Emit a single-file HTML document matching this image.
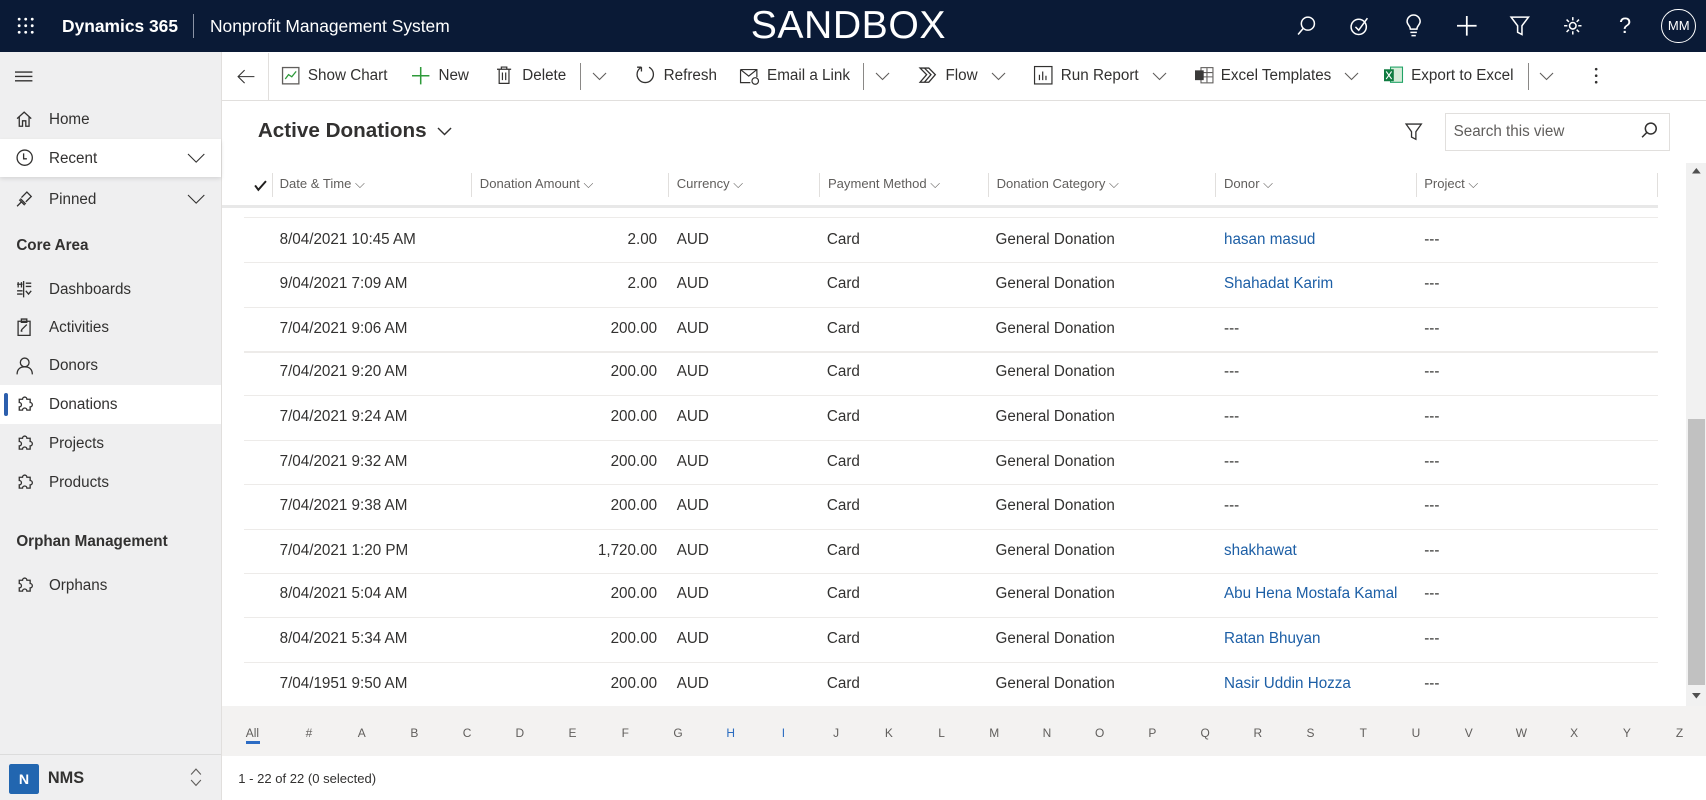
<!DOCTYPE html>
<html><head><meta charset="utf-8"><style>
html,body{margin:0;padding:0;overflow:hidden}
body{width:1568px;height:735px;zoom:1.08801;font-family:"Liberation Sans",sans-serif;color:#323130;position:relative;background:#fff}
.a{position:absolute;white-space:nowrap}
.top{left:0;top:0;width:1568px;height:48px;background:#0a1a36}
.side{left:0;top:48px;width:203px;height:687px;background:#efeff0;border-right:1px solid #e1dfdd}
.nav{font-size:14px;color:#323130}
.hdr{font-size:12px;color:#605e5c;top:162px}
.sep{width:1px;height:22px;background:#e1dfdd;top:159px}
.row{font-size:14px;color:#323130}
.lnk{color:#1d5fa6}
.rl{left:224px;width:1300px;height:1px;background:#edebe9}
.ab{font-size:11px;color:#605e5c;top:667px;width:20px;text-align:center}
svg{position:absolute;overflow:visible}
</style></head><body>
<div class="a top"></div>
<svg style="left:16px;top:16px" width="16" height="16" fill="#fff"><circle cx="2" cy="2" r="1.3"/><circle cx="8" cy="2" r="1.3"/><circle cx="14" cy="2" r="1.3"/><circle cx="2" cy="8" r="1.3"/><circle cx="8" cy="8" r="1.3"/><circle cx="14" cy="8" r="1.3"/><circle cx="2" cy="14" r="1.3"/><circle cx="8" cy="14" r="1.3"/><circle cx="14" cy="14" r="1.3"/></svg>
<div class="a" style="left:57px;top:15px;color:#fff;font-weight:bold;font-size:16px">Dynamics 365</div>
<div class="a" style="left:177px;top:13px;width:1px;height:22px;background:#8a93a5"></div>
<div class="a" style="left:193px;top:15px;color:#fff;font-size:16px">Nonprofit Management System</div>
<div class="a" style="left:690px;top:4px;color:#fff;font-size:36px;letter-spacing:0.5px">SANDBOX</div>
<svg style="left:1192px;top:15px" width="18" height="18" stroke="#fff" fill="none" stroke-width="1.4"><circle cx="10" cy="7" r="6"/><path d="M6 11 L1 17"/></svg>
<svg style="left:1241px;top:15px" width="18" height="18" stroke="#fff" fill="none" stroke-width="1.4"><circle cx="8" cy="10" r="7"/><path d="M5 10l3 3 8-11"/></svg>
<svg style="left:1292px;top:14px" width="14" height="20" stroke="#fff" fill="none" stroke-width="1.4"><path d="M4 13 C4 10 1 9 1 6 A6 6 0 0 1 13 6 C13 9 10 10 10 13 Z M4 16h6 M5 19h4"/></svg>
<svg style="left:1339px;top:15px" width="18" height="18" stroke="#fff" stroke-width="1.6"><path d="M9 0v18M0 9h18"/></svg>
<svg style="left:1388px;top:15px" width="18" height="18" stroke="#fff" fill="none" stroke-width="1.4"><path d="M1 1h16l-6 8v8l-4-2V9z"/></svg>
<svg style="left:1437px;top:15px" width="18" height="18" stroke="#fff" fill="none" stroke-width="1.4"><circle cx="9" cy="9" r="3"/><path d="M9 1v3M9 14v3M1 9h3M14 9h3M3.3 3.3l2.1 2.1M12.6 12.6l2.1 2.1M3.3 14.7l2.1-2.1M12.6 5.4l2.1-2.1"/></svg>
<div class="a" style="left:1488px;top:12px;color:#fff;font-size:20px">?</div>
<div class="a" style="left:1527px;top:8px;width:30px;height:30px;border:1.5px solid #fff;border-radius:50%;color:#fff;font-size:12px;text-align:center;line-height:30px">MM</div>

<div class="a side"></div>
<svg style="left:14px;top:65px" width="16" height="10" stroke="#323130" stroke-width="1.2"><path d="M0 1h16M0 5h16M0 9h16"/></svg>
<svg style="left:15px;top:102px" width="15" height="15" stroke="#323130" fill="none" stroke-width="1.2"><path d="M1 7L7.5 1 14 7M3 5v9h3v-5h3v5h3V5"/></svg>
<div class="a nav" style="left:45px;top:102px">Home</div>
<div class="a" style="left:0;top:128px;width:203px;height:35px;background:#fff;box-shadow:0 2px 4px rgba(0,0,0,.12)"></div>
<svg style="left:15px;top:137px" width="16" height="16" stroke="#323130" fill="none" stroke-width="1.2"><circle cx="8" cy="8" r="7"/><path d="M7 4v5h3"/></svg>
<div class="a nav" style="left:45px;top:138px">Recent</div>
<svg style="left:173px;top:142px" width="15" height="8" stroke="#323130" fill="none"><path d="M0 0l7.5 7.5L15 0"/></svg>
<svg style="left:15px;top:176px" width="15" height="15" stroke="#323130" fill="none" stroke-width="1.2"><path d="M1 14l4-4M3 8l5 5M5 6l5-5 4 4-5 5M4 7l5 5"/></svg>
<div class="a nav" style="left:45px;top:176px">Pinned</div>
<svg style="left:173px;top:179px" width="15" height="8" stroke="#323130" fill="none"><path d="M0 0l7.5 7.5L15 0"/></svg>
<div class="a nav" style="left:15px;top:218px;font-weight:bold">Core Area</div>
<svg style="left:15px;top:258px" width="15" height="15" stroke="#323130" fill="none" stroke-width="1.2"><path d="M2 1v5M5 1v5M1 3h5M9 2h5M9 5h5M1 9h5M1 12h5M9 9l2.5 3L14 9M7 0v15"/></svg>
<div class="a nav" style="left:45px;top:258px">Dashboards</div>
<svg style="left:16px;top:292px" width="13" height="17" stroke="#323130" fill="none" stroke-width="1.2"><path d="M1 3h11v13H1zM4 1h5v3H4zM4 11l5-5M4 11v1h1"/></svg>
<div class="a nav" style="left:45px;top:293px">Activities</div>
<svg style="left:15px;top:328px" width="16" height="16" stroke="#323130" fill="none" stroke-width="1.2"><circle cx="8" cy="5" r="4"/><path d="M1 16c0-5 3-7 7-7s7 2 7 7"/></svg>
<div class="a nav" style="left:45px;top:328px">Donors</div>
<div class="a" style="left:0;top:354px;width:203px;height:36px;background:#fff"></div>
<div class="a" style="left:4px;top:361px;width:3px;height:21px;background:#2c5fad;border-radius:2px"></div>
<svg style="left:15px;top:364px" width="16" height="16" stroke="#323130" fill="none" stroke-width="1.2"><path d="M3 3h3a2 2 0 0 1 4 0h3v3a2 2 0 0 1 0 4v3h-3a2 2 0 0 0-4 0H3v-3a2 2 0 0 0 0-4z"/></svg>
<div class="a nav" style="left:45px;top:364px">Donations</div>
<svg style="left:15px;top:400px" width="16" height="16" stroke="#323130" fill="none" stroke-width="1.2"><path d="M3 3h3a2 2 0 0 1 4 0h3v3a2 2 0 0 1 0 4v3h-3a2 2 0 0 0-4 0H3v-3a2 2 0 0 0 0-4z"/></svg>
<div class="a nav" style="left:45px;top:400px">Projects</div>
<svg style="left:15px;top:436px" width="16" height="16" stroke="#323130" fill="none" stroke-width="1.2"><path d="M3 3h3a2 2 0 0 1 4 0h3v3a2 2 0 0 1 0 4v3h-3a2 2 0 0 0-4 0H3v-3a2 2 0 0 0 0-4z"/></svg>
<div class="a nav" style="left:45px;top:436px">Products</div>
<div class="a nav" style="left:15px;top:490px;font-weight:bold">Orphan Management</div>
<svg style="left:15px;top:530px" width="16" height="16" stroke="#323130" fill="none" stroke-width="1.2"><path d="M3 3h3a2 2 0 0 1 4 0h3v3a2 2 0 0 1 0 4v3h-3a2 2 0 0 0-4 0H3v-3a2 2 0 0 0 0-4z"/></svg>
<div class="a nav" style="left:45px;top:530px">Orphans</div>
<div class="a" style="left:0;top:693px;width:203px;height:1px;background:#dcdcdc"></div>
<div class="a" style="left:8px;top:702px;width:28px;height:28px;background:#2266b0;color:#fff;font-size:13px;font-weight:bold;text-align:center;line-height:28px;border-radius:2px">N</div>
<div class="a" style="left:44px;top:707px;font-size:15px;font-weight:bold">NMS</div>
<svg style="left:175px;top:706px" width="11" height="17" stroke="#605e5c" fill="none"><path d="M1 6l4.5-5L10 6M1 11l4.5 5 4.5-5"/></svg>

<div class="a" style="left:204px;top:92px;width:1364px;height:1px;background:#e1dfdd"></div>
<svg style="left:218px;top:63px" width="16" height="14" stroke="#323130" fill="none"><path d="M16 7H1M7 1L1 7l6 6"/></svg>
<div class="a" style="left:246px;top:49px;width:1px;height:43px;background:#e1dfdd"></div>
<svg style="left:259px;top:62px" width="16" height="16" fill="none" stroke-width="1.2"><rect x="0.5" y="0.5" width="15" height="15" stroke="#605e5c"/><path d="M3 11l3-4 3 2 4-5" stroke="#2e9a3a"/></svg>
<div class="a row" style="left:283px;top:62px">Show Chart</div>
<svg style="left:379px;top:62px" width="16" height="16" stroke="#2e9a3a" stroke-width="1.4"><path d="M8 0v16M0 8h16"/></svg>
<div class="a row" style="left:403px;top:62px">New</div>
<svg style="left:457px;top:61px" width="13" height="17" stroke="#323130" fill="none" stroke-width="1.1"><path d="M0 3h13M4 3V1h5v2M2 3v13h9V3M5 6v7M8 6v7"/></svg>
<div class="a row" style="left:480px;top:62px">Delete</div>
<div class="a" style="left:533px;top:58px;width:1px;height:25px;background:#8a8886"></div>
<svg style="left:545px;top:67px" width="12" height="7" stroke="#605e5c" fill="none"><path d="M0 0l6 6 6-6"/></svg>
<svg style="left:585px;top:60px" width="18" height="18" stroke="#323130" fill="none" stroke-width="1.2"><path d="M5 2A7.5 7.5 0 1 0 12 2M5 2v4M5 2H1"/></svg>
<div class="a row" style="left:610px;top:62px">Refresh</div>
<svg style="left:680px;top:63px" width="18" height="14" stroke="#323130" fill="none" stroke-width="1.1"><path d="M0.5 0.5h15v7M0.5 0.5v12h9M0.5 0.5l7.5 6 7.5-6"/><circle cx="14" cy="11" r="3"/></svg>
<div class="a row" style="left:705px;top:62px">Email a Link</div>
<div class="a" style="left:793px;top:58px;width:1px;height:25px;background:#8a8886"></div>
<svg style="left:805px;top:67px" width="12" height="7" stroke="#605e5c" fill="none"><path d="M0 0l6 6 6-6"/></svg>
<svg style="left:845px;top:62px" width="17" height="15" stroke="#323130" fill="none" stroke-width="1.2"><path d="M1 1h8l6 6-6 7H1l6-7zM5 1l6 6-6 7"/></svg>
<div class="a row" style="left:869px;top:62px">Flow</div>
<svg style="left:912px;top:67px" width="12" height="7" stroke="#605e5c" fill="none"><path d="M0 0l6 6 6-6"/></svg>
<svg style="left:950px;top:61px" width="17" height="17" stroke="#323130" fill="none" stroke-width="1.1"><rect x="0.5" y="0.5" width="16" height="16"/><path d="M5 13V8M8 13V5M11 13V9"/></svg>
<div class="a row" style="left:975px;top:62px">Run Report</div>
<svg style="left:1060px;top:67px" width="12" height="7" stroke="#605e5c" fill="none"><path d="M0 0l6 6 6-6"/></svg>
<svg style="left:1098px;top:61px" width="17" height="17" fill="none"><rect x="5.5" y="1.5" width="11" height="14" stroke="#605e5c"/><path d="M6 6h10M6 10h10M11 2v13" stroke="#605e5c"/><rect x="0" y="4" width="8" height="9" fill="#3b3a39"/></svg>
<div class="a row" style="left:1122px;top:62px">Excel Templates</div>
<svg style="left:1236px;top:67px" width="12" height="7" stroke="#605e5c" fill="none"><path d="M0 0l6 6 6-6"/></svg>
<svg style="left:1272px;top:61px" width="17" height="17" fill="none"><rect x="6" y="1" width="11" height="14" fill="#d6ecd9" stroke="#21a366"/><rect x="0" y="3" width="9" height="11" fill="#107c41"/><path d="M2 5l5 7M7 5l-5 7" stroke="#fff"/></svg>
<div class="a row" style="left:1297px;top:62px">Export to Excel</div>
<div class="a" style="left:1404px;top:58px;width:1px;height:25px;background:#8a8886"></div>
<svg style="left:1415px;top:67px" width="12" height="7" stroke="#605e5c" fill="none"><path d="M0 0l6 6 6-6"/></svg>
<svg style="left:1465px;top:62px" width="4" height="16" fill="#323130"><circle cx="2" cy="2" r="1.2"/><circle cx="2" cy="8" r="1.2"/><circle cx="2" cy="14" r="1.2"/></svg>

<div class="a" style="left:237px;top:109px;font-size:19px;font-weight:bold;color:#323130">Active Donations</div>
<svg style="left:403px;top:118px" width="12" height="7" stroke="#323130" fill="none" stroke-width="1.3"><path d="M0 0l6 6 6-6"/></svg>
<svg style="left:1291px;top:113px" width="16" height="16" stroke="#323130" fill="none" stroke-width="1.2"><path d="M1 1h14l-5 7v7l-4-2V8z"/></svg>
<div class="a" style="left:1328px;top:104px;width:205px;height:33px;border:1px solid #e1dfdd"></div>
<div class="a" style="left:1336px;top:113px;font-size:14px;color:#605e5c">Search this view</div>
<svg style="left:1508px;top:112px" width="15" height="15" stroke="#323130" fill="none" stroke-width="1.4"><circle cx="9" cy="6" r="5"/><path d="M5.5 9.5L1 14"/></svg>

<svg style="left:233px;top:165px" width="12" height="10" stroke="#201f1e" fill="none" stroke-width="1.8"><path d="M1 5l3 4 7-8"/></svg>
<div class="a sep" style="left:250px"></div><div class="a sep" style="left:433px"></div><div class="a sep" style="left:614px"></div><div class="a sep" style="left:753px"></div><div class="a sep" style="left:908px"></div><div class="a sep" style="left:1117px"></div><div class="a sep" style="left:1301px"></div><div class="a sep" style="left:1523px"></div>
<div class="a hdr" style="left:257px">Date &amp; Time ⌵</div>
<div class="a hdr" style="left:441px">Donation Amount ⌵</div>
<div class="a hdr" style="left:622px">Currency ⌵</div>
<div class="a hdr" style="left:761px">Payment Method ⌵</div>
<div class="a hdr" style="left:916px">Donation Category ⌵</div>
<div class="a hdr" style="left:1125px">Donor ⌵</div>
<div class="a hdr" style="left:1309px">Project ⌵</div>
<div class="a" style="left:204px;top:188px;width:1320px;height:3px;background:#e8e8e8"></div>
<div class="a rl" style="top:199px"></div>

<div class="a" style="left:1550px;top:150px;width:18px;height:500px;background:#f1f1f1"></div>
<div class="a" style="left:1551px;top:385px;width:16px;height:245px;background:#c1c1c1"></div>
<svg style="left:1555px;top:154px" width="8" height="5" fill="#505050"><path d="M0 5L4 0l4 5z"/></svg>
<svg style="left:1555px;top:637px" width="8" height="5" fill="#505050"><path d="M0 0L4 5l4-5z"/></svg>

<div id="rows"></div>
<script>
var d=[["8/04/2021 10:45 AM","2.00","hasan masud","---"],["9/04/2021 7:09 AM","2.00","Shahadat Karim","---"],["7/04/2021 9:06 AM","200.00","---","---"],["7/04/2021 9:20 AM","200.00","---","---"],["7/04/2021 9:24 AM","200.00","---","---"],["7/04/2021 9:32 AM","200.00","---","---"],["7/04/2021 9:38 AM","200.00","---","---"],["7/04/2021 1:20 PM","1,720.00","shakhawat","---"],["8/04/2021 5:04 AM","200.00","Abu Hena Mostafa Kamal","---"],["8/04/2021 5:34 AM","200.00","Ratan Bhuyan","---"],["7/04/1951 9:50 AM","200.00","Nasir Uddin Hozza","---"]];
var h="";
d.forEach(function(r,i){var y=Math.round(212+i*40.8);
h+='<div class="a row" style="left:257px;top:'+y+'px">'+r[0]+'</div>';
h+='<div class="a row" style="left:504px;width:100px;text-align:right;top:'+y+'px">'+r[1]+'</div>';
h+='<div class="a row" style="left:622px;top:'+y+'px">AUD</div>';
h+='<div class="a row" style="left:760px;top:'+y+'px">Card</div>';
h+='<div class="a row" style="left:915px;top:'+y+'px">General Donation</div>';
h+='<div class="a row '+(r[2]=="---"?'':'lnk')+'" style="left:1125px;top:'+y+'px">'+r[2]+'</div>';
h+='<div class="a row" style="left:1309px;top:'+y+'px">---</div>';
h+='<div class="a rl" style="top:'+Math.round(212+i*40.8+29)+'px"></div>';});
document.getElementById("rows").innerHTML=h;
</script>

<div class="a" style="left:204px;top:649px;width:1364px;height:46px;background:#f3f2f1"></div>
<div id="al"></div>
<script>
var L=["All","#","A","B","C","D","E","F","G","H","I","J","K","L","M","N","O","P","Q","R","S","T","U","V","W","X","Y","Z"],s="";
L.forEach(function(c,i){var x=i==0?222:274+(i-1)*48.45;var col=(c=="H"||c=="I")?"#2a6cc0":"#605e5c";
s+='<div class="a ab" style="left:'+x+'px;color:'+col+'">'+c+'</div>';});
document.getElementById("al").innerHTML=s;
</script>
<div class="a" style="left:226px;top:681px;width:13px;height:3px;background:#2c6cc4"></div>
<div class="a" style="left:219px;top:709px;font-size:12px;color:#323130">1 - 22 of 22 (0 selected)</div>
</body></html>
